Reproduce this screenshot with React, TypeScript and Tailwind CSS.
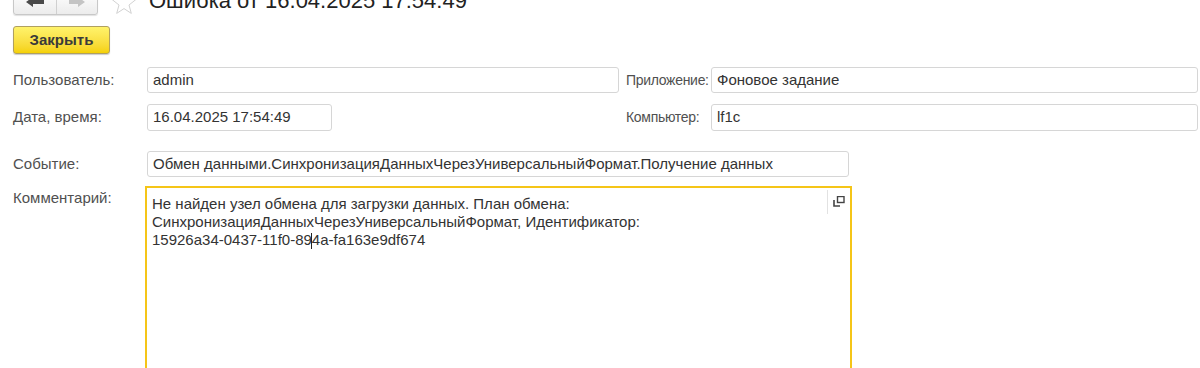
import React from "react";

const font = { fontFamily: '"Liberation Sans", Arial, sans-serif' };

function Field({ value, className }: { value: string; className: string }) {
  return (
    <div
      className={`h-[26px] border border-[#d6d6d6] rounded-[3px] bg-white px-[5px] flex items-center text-[15px] text-[#333] whitespace-nowrap overflow-hidden ${className}`}
    >
      {value}
    </div>
  );
}

function Label({ text, className = "" }: { text: string; className?: string }) {
  return <div className={`text-[#505050] shrink-0 whitespace-nowrap ${className}`}>{text}</div>;
}

export default function App() {
  return (
    <div className="w-[1200px] h-[368px] bg-white overflow-hidden relative" style={font}>
      {/* top bar, partly scrolled out of view */}
      <div className="flex items-start -mt-[10px] pl-[13px] h-[25px]">
        <div className="flex h-[25px] border border-[#c8c8c8] rounded-[3px] bg-gradient-to-b from-white to-[#ececec] shadow-[0_1px_1px_rgba(0,0,0,0.12)]">
          <div className="w-[43px] flex items-end justify-center pb-[7px] border-r border-[#d0d0d0]">
            <svg width="18" height="10" viewBox="0 0 18 10">
              <path d="M0 5 L7 0 L7 3 L18 3 L18 7 L7 7 L7 10 Z" fill="#4a4a4a" />
            </svg>
          </div>
          <div className="w-[40px] flex items-end justify-center pb-[7px]">
            <svg width="16" height="10" viewBox="0 0 16 10">
              <path d="M16 5 L9 0 L9 3 L0 3 L0 7 L9 7 L9 10 Z" fill="#c4c4c4" />
            </svg>
          </div>
        </div>
        <svg width="26" height="25" viewBox="0 0 26 25" className="ml-[13px]">
          <path
            d="M13 1 L16.1 9.2 L24.8 9.6 L18 15 L20.3 23.4 L13 18.6 L5.7 23.4 L8 15 L1.2 9.6 L9.9 9.2 Z"
            fill="none"
            stroke="#d2d2d2"
            strokeWidth="1"
          />
        </svg>
        <div className="ml-[12px] -mt-[2px] text-[22px] leading-[25px] text-[#222] whitespace-nowrap">
          Ошибка от 16.04.2025 17:54:49
        </div>
      </div>

      {/* close button */}
      <div className="pl-[13px] mt-[11px]">
        <button className="w-[97px] h-[28px] rounded-[3px] border border-[#b0a060] bg-gradient-to-b from-[#fff36a] to-[#f5d100] shadow-[0_1px_1px_rgba(0,0,0,0.2)] text-[15px] font-bold text-[#3a3a3a]">
          Закрыть
        </button>
      </div>

      <div className="pl-[13px] pr-[2px] mt-[13px] flex flex-col">
        <div className="flex items-center">
          <Label text="Пользователь:" className="w-[134px] text-[15px]" />
          <Field value="admin" className="w-[472px]" />
          <Label text="Приложение:" className="w-[85px] ml-[7px] text-[14px] tracking-[-0.3px]" />
          <Field value="Фоновое задание" className="w-[487px]" />
        </div>
        <div className="flex items-center mt-[11px]">
          <Label text="Дата, время:" className="w-[134px] text-[15px]" />
          <Field value="16.04.2025 17:54:49" className="w-[185px] h-[27px]" />
          <Label text="Компьютер:" className="w-[85px] ml-[294px] text-[14px] tracking-[-0.3px]" />
          <Field value="lf1c" className="w-[487px] h-[27px]" />
        </div>
        <div className="flex items-center mt-[20px]">
          <Label text="Событие:" className="w-[134px] text-[15px]" />
          <Field
            value="Обмен данными.СинхронизацияДанныхЧерезУниверсальныйФормат.Получение данных"
            className="w-[702px]"
          />
        </div>
        <div className="flex items-start mt-[9px]">
          <Label text="Комментарий:" className="w-[132px] pt-[1px] text-[15px]" />
          <div className="w-[707px] h-[200px] border-2 border-[#f5c518] bg-white flex">
            <div className="flex-1 pl-[5px] pt-[7px] text-[15px] leading-[18px] text-[#333]">
              <div>Не найден узел обмена для загрузки данных. План обмена:</div>
              <div>СинхронизацияДанныхЧерезУниверсальныйФормат, Идентификатор:</div>
              <div>
                15926a34-0437-11f0-89
                <span className="inline-block w-[1px] h-[16px] bg-[#222] align-middle -mx-[0.5px]" />
                4a-fa163e9df674
              </div>
            </div>
            <div className="w-[23px] h-[24px] mt-[2px] border-l border-[#e2e2e2] flex items-start justify-center pt-[6px]">
              <svg width="12" height="11" viewBox="0 0 12 11">
                <rect x="4.5" y="0.5" width="6.5" height="6" fill="none" stroke="#444" strokeWidth="1.4" />
                <path d="M1 4 L1 10 L7 10" fill="none" stroke="#444" strokeWidth="1.6" />
              </svg>
            </div>
          </div>
        </div>
      </div>
    </div>
  );
}
